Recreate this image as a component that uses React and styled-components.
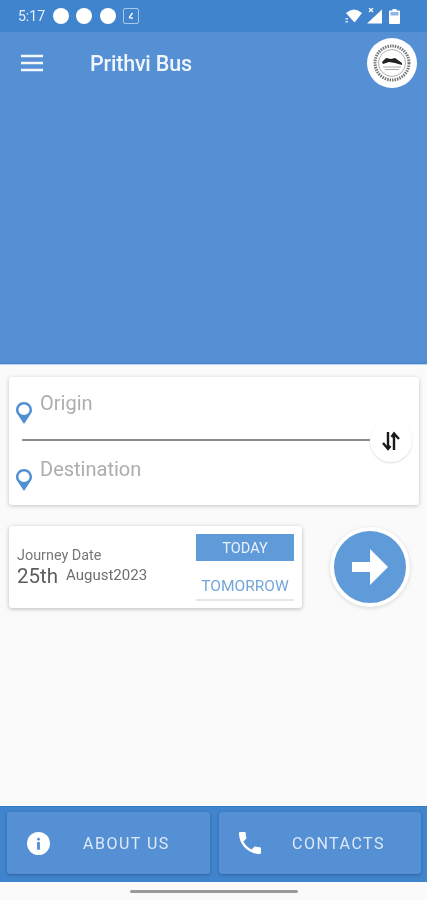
import React from 'react';
import styled, { createGlobalStyle } from 'styled-components';

const GlobalStyle = createGlobalStyle`
  html, body {
    margin: 0;
    padding: 0;
    background: #fafafa;
    font-family: Roboto, "Liberation Sans", sans-serif;
  }
`;

const Page = styled.div`
  width: 427px;
  height: 900px;
  display: flex;
  flex-direction: column;
  overflow: hidden;
  background: #fafafa;
  filter: blur(0.45px);
`;

const StatusBar = styled.div`
  height: 32px;
  background: #3f84cd;
  display: flex;
  align-items: center;
  padding: 0 27px 0 18px;
  color: #fff;
  box-sizing: border-box;
`;

const Time = styled.span`
  font-size: 14px;
  width: 35px;
  color: #e4eef9;
`;

const Dot = styled.span`
  width: 16px;
  height: 16px;
  border-radius: 50%;
  background: #fff;
  margin-right: 7.3px;
`;

const StatusRight = styled.div`
  margin-left: auto;
  display: flex;
  align-items: center;
`;

const SignalIcon = styled.svg`
  margin: 0 7px 0 4px;
`;

const Header = styled.div`
  height: 332px;
  background: #5590d5;
  border-bottom: 2px solid #4a88cf;
  box-shadow: 0 1px 0 #b9d3ee;
  box-sizing: border-box;
  padding: 6px 10px 0 21px;
`;

const HeaderRow = styled.div`
  display: flex;
  align-items: center;
  height: 50px;
`;

const Title = styled.div`
  margin-left: 47px;
  font-size: 21.5px;
  font-weight: 500;
  letter-spacing: -0.2px;
  color: #f1f6fc;
`;

const Logo = styled.div`
  margin-left: auto;
  width: 50px;
  height: 50px;
  border-radius: 50%;
  background: #fff;
  display: flex;
  align-items: center;
  justify-content: center;
`;

const Content = styled.div`
  flex: 1;
  padding: 13px 8px 0 9px;
  display: flex;
  flex-direction: column;
`;

const RouteCard = styled.div`
  position: relative;
  height: 128px;
  background: #fff;
  border-radius: 3px;
  box-shadow: 0 1px 4px rgba(0, 0, 0, 0.22);
  display: flex;
  flex-direction: column;
  box-sizing: border-box;
  padding: 0 49px 0 7px;
`;

const PlaceRow = styled.div`
  display: flex;
  align-items: flex-start;
  height: ${(p) => p.$height}px;
  padding-top: ${(p) => p.$top}px;
  box-sizing: border-box;
`;

const PinSlot = styled.div`
  width: 24px;
  padding-top: ${(p) => p.$top}px;
`;

const PlaceText = styled.span`
  font-size: 20px;
  line-height: 24px;
  color: #adadad;
`;

const Divider = styled.div`
  height: 2px;
  margin-left: 6px;
  background: #8d8d8d;
`;

const SwapButton = styled.div`
  position: absolute;
  right: 7px;
  top: 43px;
  width: 42px;
  height: 42px;
  border-radius: 50%;
  background: #fff;
  box-shadow: 0 1px 2px rgba(0, 0, 0, 0.14);
  display: flex;
  align-items: center;
  justify-content: center;
`;

const DateRow = styled.div`
  margin-top: 21px;
  display: flex;
  align-items: center;
`;

const DateCard = styled.div`
  width: 293px;
  height: 82px;
  background: #fff;
  border-radius: 3px;
  box-shadow: 0 1px 4px rgba(0, 0, 0, 0.26);
  display: flex;
  box-sizing: border-box;
  padding: 8px 8px 0 8px;
`;

const DateInfo = styled.div`
  flex: 1;
  padding-top: 13px;
  color: #6a6a6a;
`;

const DateLabel = styled.div`
  font-size: 14.4px;
  line-height: 17px;
  color: #777;
`;

const DateValue = styled.div`
  display: flex;
  align-items: flex-start;
  margin-top: 1px;
`;

const Day = styled.span`
  font-size: 20.5px;
  line-height: 23px;
  color: #5d5d5d;
`;

const Month = styled.span`
  font-size: 15px;
  line-height: 20px;
  margin-left: 8px;
  color: #6e6e6e;
`;

const DayButtons = styled.div`
  width: 98px;
  display: flex;
  flex-direction: column;
`;

const DayButton = styled.div`
  height: ${(p) => (p.$active ? 27 : 40)}px;
  box-sizing: border-box;
  padding-top: ${(p) => (p.$active ? 1 : 12)}px;
  display: flex;
  align-items: center;
  justify-content: center;
  font-size: ${(p) => (p.$active ? 14.5 : 15.5)}px;
  background: ${(p) => (p.$active ? '#5f9ad9' : 'transparent')};
  color: ${(p) => (p.$active ? '#e8f1fa' : '#74a5da')};
  border-bottom: ${(p) => (p.$active ? 'none' : '2px solid #e6e6e6')};
`;

const GoButton = styled.div`
  margin-left: 28px;
  width: 80px;
  height: 80px;
  box-sizing: border-box;
  border: 4px solid #fff;
  border-radius: 50%;
  background: #5f9ad9;
  box-shadow: 0 1px 4px rgba(0, 0, 0, 0.14);
  display: flex;
  align-items: center;
  justify-content: center;
`;

const Footer = styled.div`
  height: 76px;
  background: #3f84cd;
  border-top: 1px solid #2f7cc6;
  box-sizing: border-box;
  padding: 5px 6px 8px 7px;
  display: grid;
  grid-template-columns: 203px 202px;
  gap: 9px;
`;

const FooterButton = styled.div`
  display: flex;
  align-items: center;
  background: #5590d5;
  border-radius: 3px;
  box-shadow: 0 1px 3px rgba(0, 0, 0, 0.25);
  padding-left: 20px;
`;

const FooterLabel = styled.span`
  font-size: 16px;
  letter-spacing: 1.5px;
  color: #dde9f7;
  margin-left: ${(p) => p.$gap}px;
`;

const NavArea = styled.div`
  height: 18px;
  display: flex;
  align-items: center;
  justify-content: center;
`;

const HomeBar = styled.div`
  width: 168px;
  height: 3px;
  border-radius: 2px;
  background: #9a9a9a;
`;

const Pin = () => (
  <svg width="16" height="22" viewBox="0 0 16 22">
    <path
      fillRule="evenodd"
      fill="#4f90d2"
      d="M8 0C3.600 0 0 3.500 0 7.800c0 2.200.7 3.700 2 5.300L8 22l6-8.900c1.300-1.600 2-3.100 2-5.300C16 3.500 12.400 0 8 0zm0 2.500c3.200 0 5.500 2.400 5.500 5.300S11.200 13 8 13 2.500 10.700 2.500 7.800 4.800 2.500 8 2.500z"
    />
  </svg>
);

const App = () => (
  <Page>
    <GlobalStyle />
    <StatusBar>
      <Time>5:17</Time>
      <Dot />
      <Dot />
      <Dot />
      <svg width="16" height="16" viewBox="0 0 16 16">
        <rect x="0.5" y="0.5" width="15" height="15" rx="1.5" fill="none" stroke="#a9c8ea" />
        <path d="M9.500 5 L6.500 9 Q6 10.500 10 10" fill="none" stroke="#fff" strokeWidth="1.300" />
      </svg>
      <StatusRight>
        <svg width="17" height="14" viewBox="0 0 17 14">
          <path d="M1 4 Q9 -3 17 4 L10 13 H9 Z" fill="#fff" />
          <path d="M0.500 9 H3 V10.500 H0.500 Z M0.500 12 H3 V13.500 H0.500 Z" fill="#d5e4f5" />
        </svg>
        <SignalIcon width="16" height="16" viewBox="0 0 16 16">
          <path d="M16 1.500 V15.500 H1 Z" fill="#fff" />
          <path d="M3 0 L7 4 M7 0 L3 4" stroke="#fff" strokeWidth="1.200" />
        </SignalIcon>
        <svg width="11" height="15" viewBox="0 0 11 15">
          <path d="M3.500 0 H7.500 V1.500 H10 Q11 1.500 11 2.500 V14 Q11 15 10 15 H1 Q0 15 0 14 V2.500 Q0 1.500 1 1.500 H3.500 Z" fill="#fff" />
          <rect x="1.5" y="3" width="8" height="3.5" fill="#8db6e4" />
        </svg>
      </StatusRight>
    </StatusBar>

    <Header>
      <HeaderRow>
        <svg width="22" height="18" viewBox="0 0 22 18">
          <path d="M0 2 H22 M0 9 H22 M0 16 H22" stroke="#f4f8fd" strokeWidth="2.400" />
        </svg>
        <Title>Prithvi Bus</Title>
        <Logo>
          <svg width="40" height="40" viewBox="0 0 40 40">
            <circle cx="20" cy="20" r="17" fill="none" stroke="#777" strokeWidth="3" strokeDasharray="1.500 1" />
            <circle cx="20" cy="20" r="13.500" fill="none" stroke="#999" strokeWidth="0.800" />
            <path d="M10 19 L14 15 L19 16 L23 15 L30 20 L30 22 L23 20 L17 19 L11 21 Z" fill="#222" />
            <path d="M11 24 H29 M13 26.500 H27" stroke="#aaa" strokeWidth="1" />
          </svg>
        </Logo>
      </HeaderRow>
    </Header>

    <Content>
      <RouteCard>
        <PlaceRow $height={62} $top={14}>
          <PinSlot $top={11}><Pin /></PinSlot>
          <PlaceText>Origin</PlaceText>
        </PlaceRow>
        <Divider />
        <PlaceRow $height={64} $top={16}>
          <PinSlot $top={12}><Pin /></PinSlot>
          <PlaceText>Destination</PlaceText>
        </PlaceRow>
        <SwapButton>
          <svg width="20" height="22" viewBox="0 0 20 22">
            <path d="M7 2 V18 M2 13 L7 19 L9.500 16 M13 20 V4 M10.500 7 L13 3.500 L18 9" fill="none" stroke="#1a1a1a" strokeWidth="2.400" />
          </svg>
        </SwapButton>
      </RouteCard>

      <DateRow>
        <DateCard>
          <DateInfo>
            <DateLabel>Journey Date</DateLabel>
            <DateValue>
              <Day>25th</Day>
              <Month>August2023</Month>
            </DateValue>
          </DateInfo>
          <DayButtons>
            <DayButton $active>TODAY</DayButton>
            <DayButton>TOMORROW</DayButton>
          </DayButtons>
        </DateCard>
        <GoButton>
          <svg width="36" height="36" viewBox="0 0 36 36">
            <path d="M0 13 H18 V0 L36 18 L18 36 V23 H0 Z" fill="#fff" />
          </svg>
        </GoButton>
      </DateRow>
    </Content>

    <Footer>
      <FooterButton>
        <svg width="23" height="23" viewBox="0 0 24 24">
          <circle cx="12" cy="12" r="12" fill="#fff" />
          <rect x="10.5" y="6" width="3" height="3" rx="1.5" fill="#5590d5" />
          <rect x="10.5" y="10.5" width="3" height="8" fill="#5590d5" />
        </svg>
        <FooterLabel $gap={33}>ABOUT US</FooterLabel>
      </FooterButton>
      <FooterButton>
        <svg width="22" height="22" viewBox="3 3 18 18">
          <path
            fill="#fff"
            d="M6.620 10.790c1.440 2.830 3.760 5.140 6.590 6.590l2.200-2.200c.27-.27.67-.36 1.020-.24 1.120.37 2.330.57 3.570.57.55 0 1 .45 1 1V20c0 .55-.45 1-1 1-9.390 0-17-7.610-17-17 0-.55.45-1 1-1h3.500c.55 0 1 .45 1 1 0 1.250.2 2.450.57 3.570.11.35.03.74-.25 1.020l-2.200 2.200z"
          />
        </svg>
        <FooterLabel $gap={31}>CONTACTS</FooterLabel>
      </FooterButton>
    </Footer>
    <NavArea>
      <HomeBar />
    </NavArea>
  </Page>
);

export default App;
